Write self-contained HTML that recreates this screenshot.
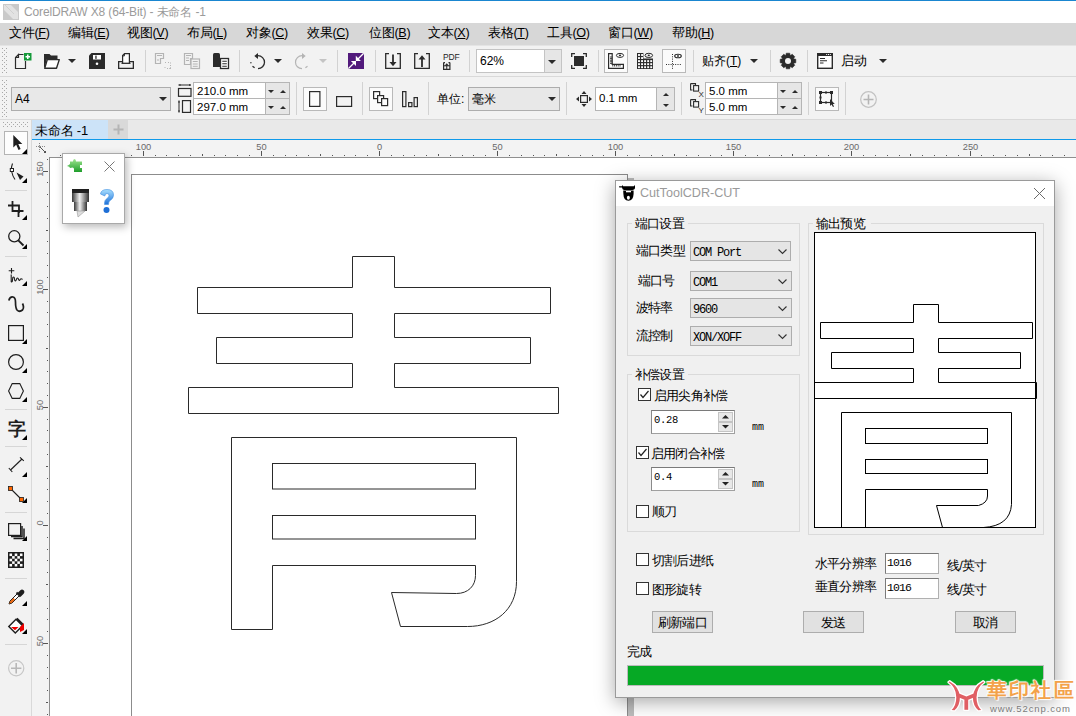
<!DOCTYPE html><html><head><meta charset="utf-8"><style>
*{box-sizing:border-box;margin:0;padding:0}
html,body{width:1076px;height:716px;overflow:hidden}
body{position:relative;background:#fff;font-family:"Liberation Sans",sans-serif;font-size:12px;color:#000}
.a{position:absolute}
.t{position:absolute;white-space:nowrap;line-height:1}
.sep{position:absolute;width:1px;background:#d4d4d4}
.hsep{position:absolute;height:1px;background:#d4d4d4}
svg{position:absolute;overflow:visible}
.mono{font-family:"Liberation Mono",monospace}
</style></head><body><div class="a" style="left:0px;top:0px;width:1076px;height:1px;background:#1a86d0"></div>
<div class="a" style="left:0px;top:1px;width:1076px;height:22px;background:#fff"></div>
<svg style="left:3px;top:4px;" width="16" height="16" viewBox="0 0 16 16"><rect x="0" y="0" width="16" height="16" fill="#c9c9c9"/><path d="M1 1 L8 1 L15 8 L15 15 L10 15 L1 6 Z" fill="#e2e2e2"/><path d="M2 1 L11 10" stroke="#d0d0d0" stroke-width="1"/></svg>
<div class="t" style="left:24px;top:6px;color:#9b9b9b;font-size:12px;letter-spacing:-0.15px">CorelDRAW X8 (64-Bit) - 未命名 -1</div>
<div class="a" style="left:0px;top:23px;width:1076px;height:22px;background:#d7d7d7"></div>
<div class="t" style="left:9px;top:26px;font-size:12.6px;letter-spacing:-0.3px;color:#000;line-height:14px">文件(<u>F</u>)</div>
<div class="t" style="left:68px;top:26px;font-size:12.6px;letter-spacing:-0.3px;color:#000;line-height:14px">编辑(<u>E</u>)</div>
<div class="t" style="left:127px;top:26px;font-size:12.6px;letter-spacing:-0.3px;color:#000;line-height:14px">视图(<u>V</u>)</div>
<div class="t" style="left:187px;top:26px;font-size:12.6px;letter-spacing:-0.3px;color:#000;line-height:14px">布局(<u>L</u>)</div>
<div class="t" style="left:246px;top:26px;font-size:12.6px;letter-spacing:-0.3px;color:#000;line-height:14px">对象(<u>C</u>)</div>
<div class="t" style="left:307px;top:26px;font-size:12.6px;letter-spacing:-0.3px;color:#000;line-height:14px">效果(<u>C</u>)</div>
<div class="t" style="left:369px;top:26px;font-size:12.6px;letter-spacing:-0.3px;color:#000;line-height:14px">位图(<u>B</u>)</div>
<div class="t" style="left:428px;top:26px;font-size:12.6px;letter-spacing:-0.3px;color:#000;line-height:14px">文本(<u>X</u>)</div>
<div class="t" style="left:488px;top:26px;font-size:12.6px;letter-spacing:-0.3px;color:#000;line-height:14px">表格(<u>T</u>)</div>
<div class="t" style="left:547px;top:26px;font-size:12.6px;letter-spacing:-0.3px;color:#000;line-height:14px">工具(<u>O</u>)</div>
<div class="t" style="left:608px;top:26px;font-size:12.6px;letter-spacing:-0.3px;color:#000;line-height:14px">窗口(<u>W</u>)</div>
<div class="t" style="left:672px;top:26px;font-size:12.6px;letter-spacing:-0.3px;color:#000;line-height:14px">帮助(<u>H</u>)</div>
<div class="a" style="left:0px;top:45px;width:1076px;height:31px;background:#f2f2f2"></div>
<div class="a" style="left:0px;top:45px;width:1076px;height:1px;background:#e4e4e4"></div>
<div class="a" style="left:0px;top:76px;width:1076px;height:1px;background:#d9d9d9"></div>
<div class="a" style="left:0px;top:77px;width:1076px;height:42px;background:#f2f2f2"></div>
<div class="a" style="left:0px;top:119px;width:1076px;height:1px;background:#d9d9d9"></div>
<svg style="left:2px;top:48px;" width="5" height="25" viewBox="0 0 5 25"><rect x="0" y="0" width="1" height="1" fill="#a8a8a8"/><rect x="4" y="0" width="1" height="1" fill="#a8a8a8"/><rect x="2" y="2" width="1" height="1" fill="#a8a8a8"/><rect x="0" y="4" width="1" height="1" fill="#a8a8a8"/><rect x="4" y="4" width="1" height="1" fill="#a8a8a8"/><rect x="2" y="6" width="1" height="1" fill="#a8a8a8"/><rect x="0" y="8" width="1" height="1" fill="#a8a8a8"/><rect x="4" y="8" width="1" height="1" fill="#a8a8a8"/><rect x="2" y="10" width="1" height="1" fill="#a8a8a8"/><rect x="0" y="12" width="1" height="1" fill="#a8a8a8"/><rect x="4" y="12" width="1" height="1" fill="#a8a8a8"/><rect x="2" y="14" width="1" height="1" fill="#a8a8a8"/><rect x="0" y="16" width="1" height="1" fill="#a8a8a8"/><rect x="4" y="16" width="1" height="1" fill="#a8a8a8"/><rect x="2" y="18" width="1" height="1" fill="#a8a8a8"/><rect x="0" y="20" width="1" height="1" fill="#a8a8a8"/><rect x="4" y="20" width="1" height="1" fill="#a8a8a8"/><rect x="2" y="22" width="1" height="1" fill="#a8a8a8"/><rect x="0" y="24" width="1" height="1" fill="#a8a8a8"/><rect x="4" y="24" width="1" height="1" fill="#a8a8a8"/></svg>
<svg style="left:2px;top:80px;" width="5" height="37" viewBox="0 0 5 37"><rect x="0" y="0" width="1" height="1" fill="#a8a8a8"/><rect x="4" y="0" width="1" height="1" fill="#a8a8a8"/><rect x="2" y="2" width="1" height="1" fill="#a8a8a8"/><rect x="0" y="4" width="1" height="1" fill="#a8a8a8"/><rect x="4" y="4" width="1" height="1" fill="#a8a8a8"/><rect x="2" y="6" width="1" height="1" fill="#a8a8a8"/><rect x="0" y="8" width="1" height="1" fill="#a8a8a8"/><rect x="4" y="8" width="1" height="1" fill="#a8a8a8"/><rect x="2" y="10" width="1" height="1" fill="#a8a8a8"/><rect x="0" y="12" width="1" height="1" fill="#a8a8a8"/><rect x="4" y="12" width="1" height="1" fill="#a8a8a8"/><rect x="2" y="14" width="1" height="1" fill="#a8a8a8"/><rect x="0" y="16" width="1" height="1" fill="#a8a8a8"/><rect x="4" y="16" width="1" height="1" fill="#a8a8a8"/><rect x="2" y="18" width="1" height="1" fill="#a8a8a8"/><rect x="0" y="20" width="1" height="1" fill="#a8a8a8"/><rect x="4" y="20" width="1" height="1" fill="#a8a8a8"/><rect x="2" y="22" width="1" height="1" fill="#a8a8a8"/><rect x="0" y="24" width="1" height="1" fill="#a8a8a8"/><rect x="4" y="24" width="1" height="1" fill="#a8a8a8"/><rect x="2" y="26" width="1" height="1" fill="#a8a8a8"/><rect x="0" y="28" width="1" height="1" fill="#a8a8a8"/><rect x="4" y="28" width="1" height="1" fill="#a8a8a8"/><rect x="2" y="30" width="1" height="1" fill="#a8a8a8"/><rect x="0" y="32" width="1" height="1" fill="#a8a8a8"/><rect x="4" y="32" width="1" height="1" fill="#a8a8a8"/><rect x="2" y="34" width="1" height="1" fill="#a8a8a8"/><rect x="0" y="36" width="1" height="1" fill="#a8a8a8"/><rect x="4" y="36" width="1" height="1" fill="#a8a8a8"/></svg>
<svg style="left:15px;top:53px;" width="17" height="16" viewBox="0 0 17 16"><path d="M3.5 1.5 H8.5 M10.5 8 V15.5 H0.5 V4.5 L3.5 1.5 V4.5 H0.5" fill="none" stroke="#2b2b2b" stroke-width="1.2"/><rect x="9" y="0" width="7.5" height="7.5" fill="#159a3a"/><path d="M12.75 1.5 V6 M10.5 3.75 H15" stroke="#fff" stroke-width="1.5"/></svg>
<svg style="left:44px;top:53px;" width="16" height="16" viewBox="0 0 16 16"><path d="M0 1 H5.5 L7 2.5 H13.5 V6 H3 L0.8 14 H0 Z" fill="#2b2b2b"/><path d="M3.3 6.6 H15.3 L12.5 15.3 H0.7 Z" fill="#fff" stroke="#2b2b2b" stroke-width="1.4" stroke-linejoin="round"/></svg>
<svg style="left:68px;top:59px;" width="8" height="4" viewBox="0 0 8 4"><path d="M0 0 H8 L4.0 4 Z" fill="#2b2b2b"/></svg>
<svg style="left:89px;top:53px;" width="16" height="16" viewBox="0 0 16 16"><path d="M2.5 0 H16 V16 H0 V2.5 Z" fill="#2b2b2b"/><rect x="4" y="2" width="8" height="4.5" fill="#fff"/><rect x="6.3" y="2.6" width="1.3" height="3.3" fill="#2b2b2b"/><circle cx="8" cy="10.8" r="1.3" fill="#fff"/></svg>
<svg style="left:118px;top:53px;" width="16" height="16" viewBox="0 0 16 16"><path d="M4.6 10.3 V2.6 L6.6 0.6 H11.4 V10.3" fill="#fff" stroke="#2b2b2b" stroke-width="1.2"/><path d="M4.6 2.9 H6.4 V0.8" fill="none" stroke="#2b2b2b" stroke-width="1"/><path d="M3.5 10.3 H12.5" stroke="#2b2b2b" stroke-width="1.3"/><path d="M4 8.6 H0.65 V15.35 H15.35 V8.6 H12" fill="none" stroke="#2b2b2b" stroke-width="1.3"/></svg>
<div class="a" style="left:145px;top:50px;width:1px;height:22px;background:#d2d2d2"></div>
<svg style="left:155px;top:53px;" width="16" height="16" viewBox="0 0 16 16"><path d="M0.5 0.5 H8.5 V5.5 H5.5 V10.5 H0.5 Z" fill="none" stroke="#b4b4b4" stroke-width="1.2"/><path d="M2 2.5 H7 M2 7 H4" stroke="#b4b4b4" stroke-width="1"/><path d="M10 9.5 h1 M13 9.5 h1 M15.5 9.5 v1 M15.5 12 v1 M15.5 14.5 v1 h-1 M12 15.5 h1 M10 14 v1" stroke="#b4b4b4" stroke-width="1"/></svg>
<svg style="left:184px;top:53px;" width="16" height="16" viewBox="0 0 16 16"><path d="M0.5 0.5 H8.5 V5.5 H6.5 V11.5 H0.5 Z" fill="none" stroke="#b4b4b4" stroke-width="1.2"/><path d="M2 2.5 H7 M2 5 H5 M2 7.5 H5" stroke="#b4b4b4" stroke-width="1"/><rect x="7" y="6" width="8.5" height="9.5" fill="none" stroke="#b4b4b4" stroke-width="1.2"/><path d="M8.8 8.5 H13.7 M8.8 11 H13.7 M8.8 13.3 H13.7" stroke="#b4b4b4" stroke-width="1"/></svg>
<svg style="left:213px;top:53px;" width="16" height="16" viewBox="0 0 16 16"><path d="M0 1.5 Q0 0 1.5 0 H5.5 Q7 0 7 1.5 V14 H0 Z" fill="#2b2b2b"/><rect x="7.5" y="5.5" width="8" height="10" fill="#fff" stroke="#2b2b2b" stroke-width="1.3"/><path d="M9.3 8.3 H13.8 M9.3 10.8 H13.8 M9.3 13.2 H13.8" stroke="#2b2b2b" stroke-width="1.1"/></svg>
<div class="a" style="left:239px;top:50px;width:1px;height:22px;background:#d2d2d2"></div>
<svg style="left:249px;top:53px;" width="16" height="16" viewBox="0 0 16 16"><path d="M9 2.7 A6.5 6.5 0 0 1 9 15.7" fill="none" stroke="#2b2b2b" stroke-width="1.3"/><path d="M5.6 14.8 L3.5 13.2" stroke="#2b2b2b" stroke-width="1.3"/><circle cx="1.9" cy="9.8" r="0.7" fill="#2b2b2b"/><path d="M5.3 2.9 L9 0 V5.9 Z" fill="#2b2b2b"/></svg>
<svg style="left:274px;top:59px;" width="8" height="4" viewBox="0 0 8 4"><path d="M0 0 H8 L4.0 4 Z" fill="#2b2b2b"/></svg>
<svg style="left:295px;top:53px;" width="16" height="16" viewBox="0 0 16 16"><g transform="translate(16 0) scale(-1 1)"><path d="M9 2.7 A6.5 6.5 0 0 1 9 15.7" fill="none" stroke="#b4b4b4" stroke-width="1.2"/><path d="M5.6 14.8 L3.5 13.2" stroke="#b4b4b4" stroke-width="1.2"/><path d="M5.3 2.9 L9 0 V5.9 Z" fill="#b4b4b4"/></g></svg>
<svg style="left:319px;top:59px;" width="8" height="4" viewBox="0 0 8 4"><path d="M0 0 H8 L4.0 4 Z" fill="#c4c4c4"/></svg>
<div class="a" style="left:337px;top:50px;width:1px;height:22px;background:#d2d2d2"></div>
<svg style="left:348px;top:53px;" width="16" height="16" viewBox="0 0 16 16"><path d="M0 0 H16 V16 H1.5 Q0 16 0 14.5 Z" fill="#521a7c"/><path d="M0.5 15.5 L6 10 M10 6 L15.7 0.3" stroke="#fff" stroke-width="1.3"/><path d="M7.8 2.8 V7.9 H12.9 Z M2.9 8 H8 V13 Z" fill="#fff"/></svg>
<div class="a" style="left:375px;top:50px;width:1px;height:22px;background:#d2d2d2"></div>
<svg style="left:385px;top:53px;" width="16" height="16" viewBox="0 0 16 16"><path d="M4 0.7 H0.7 V15.3 H15.3 V0.7 H12" fill="none" stroke="#2b2b2b" stroke-width="1.3"/><path d="M8 1.5 V11" stroke="#2b2b2b" stroke-width="1.8"/><path d="M4.5 9 H11.5 L8 13.3 Z" fill="#2b2b2b"/></svg>
<svg style="left:414px;top:53px;" width="16" height="16" viewBox="0 0 16 16"><path d="M4 0.7 H0.7 V15.3 H15.3 V0.7 H12" fill="none" stroke="#2b2b2b" stroke-width="1.3"/><path d="M8 5 V14" stroke="#2b2b2b" stroke-width="1.8"/><path d="M4.5 6.5 H11.5 L8 2.3 Z" fill="#2b2b2b"/></svg>
<div class="t" style="left:443px;top:53px;font-size:8.5px;color:#1e1e1e;letter-spacing:-0.2px;line-height:8px">PDF</div>
<svg style="left:443px;top:62px;" width="8" height="8" viewBox="0 0 8 8"><path d="M0.6 1.8 V7.4 H6.9 V1.8 M0.6 0.6 H2 M5.5 0.6 H6.9 M0.6 0.6 V2 M6.9 0.6 V2" fill="none" stroke="#2b2b2b" stroke-width="1.2"/><path d="M3.75 3.5 V7.4 M0.6 3.8 H6.9" stroke="#2b2b2b" stroke-width="1"/><path d="M1.5 3.8 L3.75 1.2 L6 3.8 Z" fill="#2b2b2b"/></svg>
<div class="a" style="left:469px;top:50px;width:1px;height:22px;background:#d2d2d2"></div>
<div class="a" style="left:476px;top:49px;width:86px;height:24px;background:#fff;border:1px solid #c4c4c4"></div>
<div class="a" style="left:544px;top:50px;width:17px;height:22px;background:#e6e6e6;border-left:1px solid #c4c4c4"></div>
<svg style="left:548px;top:60px;" width="8" height="4" viewBox="0 0 8 4"><path d="M0 0 H8 L4.0 4 Z" fill="#2b2b2b"/></svg>
<div class="t" style="left:480px;top:55px;font-size:12px;color:#000">62%</div>
<svg style="left:571px;top:53px;" width="16" height="16" viewBox="0 0 16 16"><path d="M0.7 4 V0.7 H4 M12 0.7 H15.3 V4 M15.3 12 V15.3 H12 M4 15.3 H0.7 V12" fill="none" stroke="#2b2b2b" stroke-width="1.3"/><rect x="3" y="3" width="10" height="10" fill="#2b2b2b"/></svg>
<div class="a" style="left:598px;top:50px;width:1px;height:22px;background:#d2d2d2"></div>
<div class="a" style="left:604px;top:49px;width:24px;height:24px;border:1px solid #b9b9b9;background:#fbfbfb"></div>
<svg style="left:608px;top:53px;" width="16" height="16" viewBox="0 0 16 16"><path d="M0.6 0.6 H4.2 V11.3 H15.4 V15.4 H0.6 Z" fill="#fff" stroke="#2b2b2b" stroke-width="1.2"/><path d="M2 4 H4.2 M2 5.6 H4.2 M2 7.2 H4.2 M2 8.8 H4.2 M2 10.4 H4.2 M4.8 11.3 V13.5 M6.6 11.3 V13.5 M8.4 11.3 V13.5 M10.2 11.3 V13.5 M12 11.3 V13.5" stroke="#2b2b2b" stroke-width="0.9"/><ellipse cx="12" cy="2.4" rx="3.6" ry="2" fill="none" stroke="#2b2b2b" stroke-width="1"/><ellipse cx="12" cy="2.4" rx="1.1" ry="0.8" fill="#2b2b2b"/></svg>
<svg style="left:637px;top:53px;" width="16" height="16" viewBox="0 0 16 16"><path d="M0 0 H6.4 V5.4 H16 V16 H0 Z" fill="#2b2b2b"/><g fill="#fff"><rect x="1.05" y="1.05" width="1.9" height="1.9"/><rect x="4.10" y="1.05" width="1.9" height="1.9"/><rect x="1.05" y="4.10" width="1.9" height="1.9"/><rect x="4.10" y="4.10" width="1.9" height="1.9"/><rect x="1.05" y="7.15" width="1.9" height="1.9"/><rect x="4.10" y="7.15" width="1.9" height="1.9"/><rect x="7.15" y="7.15" width="1.9" height="1.9"/><rect x="10.20" y="7.15" width="1.9" height="1.9"/><rect x="13.25" y="7.15" width="1.9" height="1.9"/><rect x="1.05" y="10.20" width="1.9" height="1.9"/><rect x="4.10" y="10.20" width="1.9" height="1.9"/><rect x="7.15" y="10.20" width="1.9" height="1.9"/><rect x="10.20" y="10.20" width="1.9" height="1.9"/><rect x="13.25" y="10.20" width="1.9" height="1.9"/><rect x="1.05" y="13.25" width="1.9" height="1.9"/><rect x="4.10" y="13.25" width="1.9" height="1.9"/><rect x="7.15" y="13.25" width="1.9" height="1.9"/><rect x="10.20" y="13.25" width="1.9" height="1.9"/><rect x="13.25" y="13.25" width="1.9" height="1.9"/></g><ellipse cx="11.8" cy="2.4" rx="3.8" ry="2.1" fill="#f2f2f2" stroke="#2b2b2b" stroke-width="1"/><ellipse cx="11.8" cy="2.4" rx="1.1" ry="0.8" fill="#2b2b2b"/></svg>
<div class="a" style="left:662px;top:49px;width:24px;height:24px;border:1px solid #b9b9b9;background:#fbfbfb"></div>
<svg style="left:666px;top:53px;" width="16" height="16" viewBox="0 0 16 16"><path d="M6.5 1 V16 M0 11.5 H16" fill="none" stroke="#2b2b2b" stroke-width="1" stroke-dasharray="1 1.3"/><ellipse cx="12" cy="3" rx="3.3" ry="1.8" fill="#fbfbfb" stroke="#2b2b2b" stroke-width="1.1"/><circle cx="12" cy="3" r="0.9" fill="#2b2b2b"/></svg>
<div class="a" style="left:693px;top:50px;width:1px;height:22px;background:#d2d2d2"></div>
<div class="t" style="left:702px;top:55px;font-size:12px">贴齐(<u>T</u>)</div>
<svg style="left:750px;top:59px;" width="8" height="4" viewBox="0 0 8 4"><path d="M0 0 H8 L4.0 4 Z" fill="#2b2b2b"/></svg>
<div class="a" style="left:770px;top:50px;width:1px;height:22px;background:#d2d2d2"></div>
<svg style="left:780px;top:53px;" width="16" height="16" viewBox="0 0 16 16"><path d="M15.81 6.25 L15.81 9.75 L13.11 10.28 L13.23 10.00 L14.76 12.29 L12.29 14.76 L10.00 13.23 L10.28 13.11 L9.75 15.81 L6.25 15.81 L5.72 13.11 L6.00 13.23 L3.71 14.76 L1.24 12.29 L2.77 10.00 L2.89 10.28 L0.19 9.75 L0.19 6.25 L2.89 5.72 L2.77 6.00 L1.24 3.71 L3.71 1.24 L6.00 2.77 L5.72 2.89 L6.25 0.19 L9.75 0.19 L10.28 2.89 L10.00 2.77 L12.29 1.24 L14.76 3.71 L13.23 6.00 L13.11 5.72 Z" fill="#2b2b2b" stroke="#2b2b2b" stroke-width="0.6" stroke-linejoin="round"/><circle cx="8" cy="8" r="3" fill="#f2f2f2"/></svg>
<div class="a" style="left:807px;top:50px;width:1px;height:22px;background:#d2d2d2"></div>
<svg style="left:817px;top:53px;" width="16" height="16" viewBox="0 0 16 16"><rect x="0.7" y="0.7" width="14.6" height="14.6" fill="#fff" stroke="#2b2b2b" stroke-width="1.4"/><rect x="0" y="0" width="16" height="3" fill="#2b2b2b"/><path d="M11 1.5 h1 M12.8 1.5 h1 M9.2 1.5 h1" stroke="#fff" stroke-width="1"/><path d="M3 5.5 H8 M3 7.8 H10 M3 10 H6.5" stroke="#2b2b2b" stroke-width="1.1"/></svg>
<div class="t" style="left:841px;top:55px;font-size:12.5px">启动</div>
<svg style="left:879px;top:59px;" width="8" height="4" viewBox="0 0 8 4"><path d="M0 0 H8 L4.0 4 Z" fill="#2b2b2b"/></svg>
<div class="a" style="left:11px;top:87px;width:160px;height:24px;background:#e8e8e8;border:1px solid #adadad"></div>
<div class="t" style="left:15px;top:93px;font-size:12px">A4</div>
<svg style="left:159px;top:97px;" width="8" height="4" viewBox="0 0 8 4"><path d="M0 0 H8 L4.0 4 Z" fill="#2b2b2b"/></svg>
<svg style="left:178px;top:84px;" width="14" height="13" viewBox="0 0 14 13"><path d="M0.5 1 H13" stroke="#2b2b2b" stroke-width="1"/><path d="M0.5 1 L2.5 0 V2 Z M13 1 L11 0 V2 Z" fill="#2b2b2b"/><rect x="0.5" y="4.5" width="12.5" height="7.8" fill="none" stroke="#2b2b2b" stroke-width="1.2"/></svg>
<svg style="left:178px;top:100px;" width="14" height="13" viewBox="0 0 14 13"><path d="M1 0.5 V12.5" stroke="#2b2b2b" stroke-width="1"/><path d="M1 0.5 L0 2.5 H2 Z M1 12.5 L0 10.5 H2 Z" fill="#2b2b2b"/><rect x="4.5" y="0.6" width="8" height="11.8" fill="none" stroke="#2b2b2b" stroke-width="1.2"/></svg>
<div class="a" style="left:193px;top:82px;width:97px;height:33px;background:#fff;border:1px solid #b5b5b5"></div>
<div class="a" style="left:193px;top:98px;width:97px;height:1px;background:#b5b5b5"></div>
<div class="a" style="left:265px;top:82px;width:25px;height:33px;background:#e6e6e6;border:1px solid #b5b5b5"></div>
<div class="a" style="left:265px;top:98px;width:25px;height:1px;background:#b5b5b5"></div>
<div class="t" style="left:197px;top:86px;font-size:11.5px">210.0 mm</div>
<div class="t" style="left:197px;top:102px;font-size:11.5px">297.0 mm</div>
<svg style="left:268px;top:90px;" width="6" height="3" viewBox="0 0 6 3"><path d="M0 0 H6 L3.0 3 Z" fill="#2b2b2b"/></svg>
<svg style="left:280px;top:90px;" width="6" height="3" viewBox="0 0 6 3"><path d="M0 3 H6 L3.0 0 Z" fill="#2b2b2b"/></svg>
<svg style="left:268px;top:106px;" width="6" height="3" viewBox="0 0 6 3"><path d="M0 0 H6 L3.0 3 Z" fill="#2b2b2b"/></svg>
<svg style="left:280px;top:106px;" width="6" height="3" viewBox="0 0 6 3"><path d="M0 3 H6 L3.0 0 Z" fill="#2b2b2b"/></svg>
<div class="a" style="left:296px;top:82px;width:1px;height:33px;background:#d2d2d2"></div>
<div class="a" style="left:303px;top:87px;width:24px;height:24px;border:1px solid #b9b9b9;background:#fbfbfb"></div>
<svg style="left:309px;top:91px;" width="12" height="16" viewBox="0 0 12 16"><rect x="0.6" y="0.6" width="10.3" height="14.8" fill="none" stroke="#2b2b2b" stroke-width="1.2"/></svg>
<svg style="left:336px;top:96px;" width="16" height="11" viewBox="0 0 16 11"><rect x="0.6" y="0.6" width="15" height="9.8" fill="none" stroke="#2b2b2b" stroke-width="1.2"/></svg>
<div class="a" style="left:362px;top:82px;width:1px;height:33px;background:#d2d2d2"></div>
<div class="a" style="left:369px;top:87px;width:24px;height:24px;border:1px solid #b9b9b9;background:#fbfbfb"></div>
<svg style="left:373px;top:91px;" width="16" height="16" viewBox="0 0 16 16"><rect x="0.6" y="0.6" width="6" height="7" fill="#fbfbfb" stroke="#2b2b2b" stroke-width="1.2"/><rect x="4.6" y="4.6" width="6" height="7" fill="#fbfbfb" stroke="#2b2b2b" stroke-width="1.2"/><rect x="8.6" y="7.6" width="6" height="7" fill="#fbfbfb" stroke="#2b2b2b" stroke-width="1.2"/></svg>
<svg style="left:402px;top:91px;" width="16" height="16" viewBox="0 0 16 16"><rect x="0.6" y="0.6" width="3.3" height="15" fill="none" stroke="#2b2b2b" stroke-width="1.2"/><rect x="6.6" y="11.6" width="3.3" height="4" fill="none" stroke="#2b2b2b" stroke-width="1.2"/><rect x="12.1" y="6.6" width="3.3" height="9" fill="none" stroke="#2b2b2b" stroke-width="1.2"/></svg>
<div class="a" style="left:428px;top:82px;width:1px;height:33px;background:#d2d2d2"></div>
<div class="t" style="left:437px;top:93px;font-size:12px">单位:</div>
<div class="a" style="left:468px;top:87px;width:92px;height:24px;background:#e8e8e8;border:1px solid #adadad"></div>
<div class="t" style="left:472px;top:93px;font-size:12px">毫米</div>
<svg style="left:548px;top:97px;" width="8" height="4" viewBox="0 0 8 4"><path d="M0 0 H8 L4.0 4 Z" fill="#2b2b2b"/></svg>
<div class="a" style="left:566px;top:82px;width:1px;height:33px;background:#d2d2d2"></div>
<svg style="left:576px;top:91px;" width="16" height="16" viewBox="0 0 16 16"><rect x="4.6" y="4.6" width="6.8" height="6.8" fill="none" stroke="#2b2b2b" stroke-width="1.2"/><path d="M8 0 L5.5 3 H10.5 Z M8 16 L5.5 13 H10.5 Z M0 8 L3 5.5 V10.5 Z M16 8 L13 5.5 V10.5 Z" fill="#2b2b2b"/></svg>
<div class="a" style="left:595px;top:87px;width:80px;height:24px;background:#fff;border:1px solid #b5b5b5"></div>
<div class="a" style="left:656px;top:87px;width:19px;height:24px;background:#e6e6e6;border:1px solid #b5b5b5"></div>
<svg style="left:663px;top:93px;" width="6" height="3" viewBox="0 0 6 3"><path d="M0 3 H6 L3.0 0 Z" fill="#2b2b2b"/></svg>
<svg style="left:663px;top:104px;" width="6" height="3" viewBox="0 0 6 3"><path d="M0 0 H6 L3.0 3 Z" fill="#2b2b2b"/></svg>
<div class="t" style="left:599px;top:93px;font-size:11.5px">0.1 mm</div>
<div class="a" style="left:681px;top:82px;width:1px;height:33px;background:#d2d2d2"></div>
<svg style="left:690px;top:83px;" width="15" height="15" viewBox="0 0 15 15"><path d="M0.6 0.6 H5.5 V2.5 M0.6 0.6 V7 H2.5" fill="none" stroke="#2b2b2b" stroke-width="1.1"/><rect x="3.6" y="2.6" width="5" height="5.5" fill="none" stroke="#2b2b2b" stroke-width="1.1"/><text x="8.5" y="14" font-size="8" font-family="Liberation Sans" fill="#2b2b2b">X</text></svg>
<svg style="left:690px;top:99px;" width="15" height="15" viewBox="0 0 15 15"><path d="M0.6 0.6 H5.5 V2.5 M0.6 0.6 V7 H2.5" fill="none" stroke="#2b2b2b" stroke-width="1.1"/><rect x="3.6" y="2.6" width="5" height="5.5" fill="none" stroke="#2b2b2b" stroke-width="1.1"/><text x="8.5" y="14" font-size="8" font-family="Liberation Sans" fill="#2b2b2b">Y</text></svg>
<div class="a" style="left:705px;top:82px;width:97px;height:33px;background:#fff;border:1px solid #b5b5b5"></div>
<div class="a" style="left:705px;top:98px;width:97px;height:1px;background:#b5b5b5"></div>
<div class="a" style="left:777px;top:82px;width:25px;height:33px;background:#e6e6e6;border:1px solid #b5b5b5"></div>
<div class="a" style="left:777px;top:98px;width:25px;height:1px;background:#b5b5b5"></div>
<div class="t" style="left:709px;top:86px;font-size:11.5px">5.0 mm</div>
<div class="t" style="left:709px;top:102px;font-size:11.5px">5.0 mm</div>
<svg style="left:780px;top:90px;" width="6" height="3" viewBox="0 0 6 3"><path d="M0 0 H6 L3.0 3 Z" fill="#2b2b2b"/></svg>
<svg style="left:792px;top:90px;" width="6" height="3" viewBox="0 0 6 3"><path d="M0 3 H6 L3.0 0 Z" fill="#2b2b2b"/></svg>
<svg style="left:780px;top:106px;" width="6" height="3" viewBox="0 0 6 3"><path d="M0 0 H6 L3.0 3 Z" fill="#2b2b2b"/></svg>
<svg style="left:792px;top:106px;" width="6" height="3" viewBox="0 0 6 3"><path d="M0 3 H6 L3.0 0 Z" fill="#2b2b2b"/></svg>
<div class="a" style="left:808px;top:82px;width:1px;height:33px;background:#d2d2d2"></div>
<div class="a" style="left:815px;top:87px;width:24px;height:24px;border:1px solid #b9b9b9;background:#fbfbfb"></div>
<svg style="left:819px;top:91px;" width="16" height="16" viewBox="0 0 16 16"><rect x="1.5" y="1.5" width="11" height="10" fill="none" stroke="#2b2b2b" stroke-width="1.2"/><g fill="#2b2b2b"><rect x="0" y="0" width="3" height="3"/><rect x="11" y="0" width="3" height="3"/><rect x="0" y="10" width="3" height="3"/><rect x="11" y="10" width="2" height="3"/><rect x="6" y="0.5" width="2" height="2"/><rect x="6" y="10.5" width="2" height="2"/><rect x="0.5" y="5.5" width="2" height="2"/></g><path d="M11 8 L11 15 L12.5 13.5 L14 16 L15 15.5 L13.8 13 L15.8 13 Z" fill="#2b2b2b"/></svg>
<div class="a" style="left:845px;top:82px;width:1px;height:33px;background:#d2d2d2"></div>
<svg style="left:860px;top:91px;" width="17" height="17" viewBox="0 0 17 17"><circle cx="8.5" cy="8.5" r="7.8" fill="none" stroke="#c2c2c2" stroke-width="1.2"/><path d="M8.5 3.5 V13.5 M3.5 8.5 H13.5" stroke="#b5b5b5" stroke-width="1.6"/></svg>
<div class="a" style="left:32px;top:120px;width:1044px;height:19px;background:#e9e9e9"></div>
<div class="a" style="left:32px;top:120px;width:76px;height:19px;background:#cce3f8"></div>
<div class="t" style="left:35px;top:124px;font-size:13px;letter-spacing:-0.2px;color:#000">未命名 -1</div>
<div class="a" style="left:108px;top:120px;width:20px;height:19px;background:#d9d9d9"></div>
<svg style="left:113px;top:124px;" width="11" height="11" viewBox="0 0 11 11"><path d="M5.5 0.5 V10.5 M0.5 5.5 H10.5" stroke="#b5b5b5" stroke-width="2"/></svg>
<div class="a" style="left:32px;top:139px;width:1044px;height:1px;background:#0f9aea"></div>
<div class="a" style="left:0px;top:120px;width:31px;height:596px;background:#f2f2f2"></div>
<div class="a" style="left:31px;top:120px;width:1px;height:596px;background:#d9d9d9"></div>
<svg style="left:3px;top:122px;" width="26" height="5" viewBox="0 0 26 5"><rect x="0" y="0" width="1" height="1" fill="#a8a8a8"/><rect x="0" y="4" width="1" height="1" fill="#a8a8a8"/><rect x="2" y="2" width="1" height="1" fill="#a8a8a8"/><rect x="4" y="0" width="1" height="1" fill="#a8a8a8"/><rect x="4" y="4" width="1" height="1" fill="#a8a8a8"/><rect x="6" y="2" width="1" height="1" fill="#a8a8a8"/><rect x="8" y="0" width="1" height="1" fill="#a8a8a8"/><rect x="8" y="4" width="1" height="1" fill="#a8a8a8"/><rect x="10" y="2" width="1" height="1" fill="#a8a8a8"/><rect x="12" y="0" width="1" height="1" fill="#a8a8a8"/><rect x="12" y="4" width="1" height="1" fill="#a8a8a8"/><rect x="14" y="2" width="1" height="1" fill="#a8a8a8"/><rect x="16" y="0" width="1" height="1" fill="#a8a8a8"/><rect x="16" y="4" width="1" height="1" fill="#a8a8a8"/><rect x="18" y="2" width="1" height="1" fill="#a8a8a8"/><rect x="20" y="0" width="1" height="1" fill="#a8a8a8"/><rect x="20" y="4" width="1" height="1" fill="#a8a8a8"/><rect x="22" y="2" width="1" height="1" fill="#a8a8a8"/><rect x="24" y="0" width="1" height="1" fill="#a8a8a8"/><rect x="24" y="4" width="1" height="1" fill="#a8a8a8"/></svg>
<div class="a" style="left:32px;top:140px;width:1044px;height:17px;background:#f3f3f3"></div>
<div class="a" style="left:32px;top:157px;width:17px;height:559px;background:#f3f3f3"></div>
<div class="a" style="left:49px;top:157px;width:1027px;height:1px;background:#8f8f8f"></div>
<div class="a" style="left:49px;top:157px;width:1px;height:559px;background:#8f8f8f"></div>
<div class="a" style="left:50px;top:158px;width:1026px;height:558px;background:#fff"></div>
<svg style="left:0;top:0" width="1076" height="716" viewBox="0 0 1076 716"><rect x="60" y="155" width="1" height="1" fill="#555"/><rect x="72" y="155" width="1" height="1" fill="#555"/><rect x="84" y="154" width="1" height="2" fill="#555"/><rect x="96" y="155" width="1" height="1" fill="#555"/><rect x="107" y="155" width="1" height="1" fill="#555"/><rect x="119" y="155" width="1" height="1" fill="#555"/><rect x="131" y="155" width="1" height="1" fill="#555"/><rect x="143" y="151" width="1" height="5" fill="#555"/><text x="143.5" y="150" font-size="9.3" font-family="Liberation Sans" fill="#6a6a6a" text-anchor="middle">100</text><rect x="155" y="155" width="1" height="1" fill="#555"/><rect x="166" y="155" width="1" height="1" fill="#555"/><rect x="178" y="155" width="1" height="1" fill="#555"/><rect x="190" y="155" width="1" height="1" fill="#555"/><rect x="202" y="154" width="1" height="2" fill="#555"/><rect x="214" y="155" width="1" height="1" fill="#555"/><rect x="225" y="155" width="1" height="1" fill="#555"/><rect x="237" y="155" width="1" height="1" fill="#555"/><rect x="249" y="155" width="1" height="1" fill="#555"/><rect x="261" y="151" width="1" height="5" fill="#555"/><text x="261.5" y="150" font-size="9.3" font-family="Liberation Sans" fill="#6a6a6a" text-anchor="middle">50</text><rect x="273" y="155" width="1" height="1" fill="#555"/><rect x="285" y="155" width="1" height="1" fill="#555"/><rect x="296" y="155" width="1" height="1" fill="#555"/><rect x="308" y="155" width="1" height="1" fill="#555"/><rect x="320" y="154" width="1" height="2" fill="#555"/><rect x="332" y="155" width="1" height="1" fill="#555"/><rect x="344" y="155" width="1" height="1" fill="#555"/><rect x="355" y="155" width="1" height="1" fill="#555"/><rect x="367" y="155" width="1" height="1" fill="#555"/><rect x="379" y="151" width="1" height="5" fill="#555"/><text x="379.5" y="150" font-size="9.3" font-family="Liberation Sans" fill="#6a6a6a" text-anchor="middle">0</text><rect x="391" y="155" width="1" height="1" fill="#555"/><rect x="403" y="155" width="1" height="1" fill="#555"/><rect x="414" y="155" width="1" height="1" fill="#555"/><rect x="426" y="155" width="1" height="1" fill="#555"/><rect x="438" y="154" width="1" height="2" fill="#555"/><rect x="450" y="155" width="1" height="1" fill="#555"/><rect x="462" y="155" width="1" height="1" fill="#555"/><rect x="473" y="155" width="1" height="1" fill="#555"/><rect x="485" y="155" width="1" height="1" fill="#555"/><rect x="497" y="151" width="1" height="5" fill="#555"/><text x="497.5" y="150" font-size="9.3" font-family="Liberation Sans" fill="#6a6a6a" text-anchor="middle">50</text><rect x="509" y="155" width="1" height="1" fill="#555"/><rect x="521" y="155" width="1" height="1" fill="#555"/><rect x="533" y="155" width="1" height="1" fill="#555"/><rect x="544" y="155" width="1" height="1" fill="#555"/><rect x="556" y="154" width="1" height="2" fill="#555"/><rect x="568" y="155" width="1" height="1" fill="#555"/><rect x="580" y="155" width="1" height="1" fill="#555"/><rect x="592" y="155" width="1" height="1" fill="#555"/><rect x="603" y="155" width="1" height="1" fill="#555"/><rect x="615" y="151" width="1" height="5" fill="#555"/><text x="615.5" y="150" font-size="9.3" font-family="Liberation Sans" fill="#6a6a6a" text-anchor="middle">100</text><rect x="627" y="155" width="1" height="1" fill="#555"/><rect x="639" y="155" width="1" height="1" fill="#555"/><rect x="651" y="155" width="1" height="1" fill="#555"/><rect x="662" y="155" width="1" height="1" fill="#555"/><rect x="674" y="154" width="1" height="2" fill="#555"/><rect x="686" y="155" width="1" height="1" fill="#555"/><rect x="698" y="155" width="1" height="1" fill="#555"/><rect x="710" y="155" width="1" height="1" fill="#555"/><rect x="721" y="155" width="1" height="1" fill="#555"/><rect x="733" y="151" width="1" height="5" fill="#555"/><text x="733.5" y="150" font-size="9.3" font-family="Liberation Sans" fill="#6a6a6a" text-anchor="middle">150</text><rect x="745" y="155" width="1" height="1" fill="#555"/><rect x="757" y="155" width="1" height="1" fill="#555"/><rect x="769" y="155" width="1" height="1" fill="#555"/><rect x="781" y="155" width="1" height="1" fill="#555"/><rect x="792" y="154" width="1" height="2" fill="#555"/><rect x="804" y="155" width="1" height="1" fill="#555"/><rect x="816" y="155" width="1" height="1" fill="#555"/><rect x="828" y="155" width="1" height="1" fill="#555"/><rect x="840" y="155" width="1" height="1" fill="#555"/><rect x="851" y="151" width="1" height="5" fill="#555"/><text x="851.5" y="150" font-size="9.3" font-family="Liberation Sans" fill="#6a6a6a" text-anchor="middle">200</text><rect x="863" y="155" width="1" height="1" fill="#555"/><rect x="875" y="155" width="1" height="1" fill="#555"/><rect x="887" y="155" width="1" height="1" fill="#555"/><rect x="899" y="155" width="1" height="1" fill="#555"/><rect x="910" y="154" width="1" height="2" fill="#555"/><rect x="922" y="155" width="1" height="1" fill="#555"/><rect x="934" y="155" width="1" height="1" fill="#555"/><rect x="946" y="155" width="1" height="1" fill="#555"/><rect x="958" y="155" width="1" height="1" fill="#555"/><rect x="970" y="151" width="1" height="5" fill="#555"/><text x="970.5" y="150" font-size="9.3" font-family="Liberation Sans" fill="#6a6a6a" text-anchor="middle">250</text><rect x="981" y="155" width="1" height="1" fill="#555"/><rect x="993" y="155" width="1" height="1" fill="#555"/><rect x="1005" y="155" width="1" height="1" fill="#555"/><rect x="1017" y="155" width="1" height="1" fill="#555"/><rect x="1029" y="154" width="1" height="2" fill="#555"/><rect x="1040" y="155" width="1" height="1" fill="#555"/><rect x="1052" y="155" width="1" height="1" fill="#555"/><rect x="1064" y="155" width="1" height="1" fill="#555"/><rect x="47" y="714" width="1" height="1" fill="#555"/><rect x="46" y="702" width="2" height="1" fill="#555"/><rect x="47" y="690" width="1" height="1" fill="#555"/><rect x="47" y="678" width="1" height="1" fill="#555"/><rect x="47" y="667" width="1" height="1" fill="#555"/><rect x="47" y="655" width="1" height="1" fill="#555"/><rect x="43" y="643" width="5" height="1" fill="#555"/><text x="0" y="0" transform="translate(42.6 641) rotate(-90)" font-size="9.3" font-family="Liberation Sans" fill="#6a6a6a" text-anchor="middle">50</text><rect x="47" y="631" width="1" height="1" fill="#555"/><rect x="47" y="619" width="1" height="1" fill="#555"/><rect x="47" y="608" width="1" height="1" fill="#555"/><rect x="47" y="596" width="1" height="1" fill="#555"/><rect x="46" y="584" width="2" height="1" fill="#555"/><rect x="47" y="572" width="1" height="1" fill="#555"/><rect x="47" y="560" width="1" height="1" fill="#555"/><rect x="47" y="549" width="1" height="1" fill="#555"/><rect x="47" y="537" width="1" height="1" fill="#555"/><rect x="43" y="525" width="5" height="1" fill="#555"/><text x="0" y="0" transform="translate(42.6 523) rotate(-90)" font-size="9.3" font-family="Liberation Sans" fill="#6a6a6a" text-anchor="middle">0</text><rect x="47" y="513" width="1" height="1" fill="#555"/><rect x="47" y="501" width="1" height="1" fill="#555"/><rect x="47" y="489" width="1" height="1" fill="#555"/><rect x="47" y="478" width="1" height="1" fill="#555"/><rect x="46" y="466" width="2" height="1" fill="#555"/><rect x="47" y="454" width="1" height="1" fill="#555"/><rect x="47" y="442" width="1" height="1" fill="#555"/><rect x="47" y="430" width="1" height="1" fill="#555"/><rect x="47" y="419" width="1" height="1" fill="#555"/><rect x="43" y="407" width="5" height="1" fill="#555"/><text x="0" y="0" transform="translate(42.6 405) rotate(-90)" font-size="9.3" font-family="Liberation Sans" fill="#6a6a6a" text-anchor="middle">50</text><rect x="47" y="395" width="1" height="1" fill="#555"/><rect x="47" y="383" width="1" height="1" fill="#555"/><rect x="47" y="371" width="1" height="1" fill="#555"/><rect x="47" y="360" width="1" height="1" fill="#555"/><rect x="46" y="348" width="2" height="1" fill="#555"/><rect x="47" y="336" width="1" height="1" fill="#555"/><rect x="47" y="324" width="1" height="1" fill="#555"/><rect x="47" y="312" width="1" height="1" fill="#555"/><rect x="47" y="301" width="1" height="1" fill="#555"/><rect x="43" y="289" width="5" height="1" fill="#555"/><text x="0" y="0" transform="translate(42.6 287) rotate(-90)" font-size="9.3" font-family="Liberation Sans" fill="#6a6a6a" text-anchor="middle">100</text><rect x="47" y="277" width="1" height="1" fill="#555"/><rect x="47" y="265" width="1" height="1" fill="#555"/><rect x="47" y="253" width="1" height="1" fill="#555"/><rect x="47" y="241" width="1" height="1" fill="#555"/><rect x="46" y="230" width="2" height="1" fill="#555"/><rect x="47" y="218" width="1" height="1" fill="#555"/><rect x="47" y="206" width="1" height="1" fill="#555"/><rect x="47" y="194" width="1" height="1" fill="#555"/><rect x="47" y="182" width="1" height="1" fill="#555"/><rect x="43" y="171" width="5" height="1" fill="#555"/><text x="0" y="0" transform="translate(42.6 169) rotate(-90)" font-size="9.3" font-family="Liberation Sans" fill="#6a6a6a" text-anchor="middle">150</text><rect x="47" y="159" width="1" height="1" fill="#555"/></svg>
<svg style="left:36px;top:143px;" width="11" height="11" viewBox="0 0 11 11"><path d="M3.5 0 V10 M0 3.5 H10" stroke="#8a8a8a" stroke-width="1" stroke-dasharray="1 1"/><path d="M3.5 3.5 L9.5 9.5" stroke="#555" stroke-width="1"/><rect x="8" y="8" width="2" height="2" fill="#555"/></svg>
<div class="a" style="left:131px;top:174px;width:497px;height:560px;border:1px solid #8c8c8c;background:#fff"></div>
<div class="a" style="left:628px;top:178px;width:6px;height:540px;background:#bdbdbd"></div>
<svg style="left:0;top:0" width="1076" height="716" viewBox="0 0 1076 716"><path d="M352.5 256.5 H394.5 V287.5 H550.5 V313.5 H394.5 V337.5 H530.5 V363.5 H394.5 V387.5 H558.5 V413.5 H188.5 V387.5 H352.5 V363.5 H216.5 V337.5 H352.5 V313.5 H197.5 V287.5 H352.5 Z" fill="none" stroke="#2a2a2a" stroke-width="1"/><path d="M231.5 437.5 H516.5 V581.5 C516.5 610 495 626.5 467.5 626.5 H400.5 L391.5 592.5 L456.5 593.5 C468 593.5 475.5 586 475.5 575.5 V565.5 H272.5 V629.5 H231.5 Z" fill="none" stroke="#2a2a2a" stroke-width="1"/><rect x="272.5" y="463.5" width="203" height="25.5" fill="none" stroke="#2a2a2a" stroke-width="1"/><rect x="272.5" y="515.5" width="203" height="23.5" fill="none" stroke="#2a2a2a" stroke-width="1"/></svg>
<div class="a" style="left:4px;top:131px;width:24px;height:24px;border:1px solid #b4b4b4;background:#fdfdfd"></div>
<svg style="left:12px;top:135px;" width="10" height="16" viewBox="0 0 10 16"><path d="M1.3 0 V12.5 L4.2 9.8 L6.5 15 L8.6 14 L6.3 9 H10.3 Z" fill="#1e1e1e"/></svg>
<svg style="left:22px;top:149px;" width="5" height="5" viewBox="0 0 5 5"><path d="M5 0 V5 H0 Z" fill="#000"/></svg>
<svg style="left:8px;top:163px;" width="20" height="21" viewBox="0 0 20 21"><path d="M4.5 0.5 Q3 4 3.5 8 Q4.5 13 7 16.5" fill="none" stroke="#1e1e1e" stroke-width="1.1"/><rect x="2.3" y="5.5" width="3.2" height="3" fill="#fff" stroke="#1e1e1e" stroke-width="1"/><path d="M8.5 9.5 L15.5 13.5 L12 17 Z" fill="#1e1e1e"/></svg>
<svg style="left:22px;top:178px;" width="5" height="5" viewBox="0 0 5 5"><path d="M5 0 V5 H0 Z" fill="#000"/></svg>
<div class="a" style="left:5px;top:190px;width:22px;height:1px;background:#d6d6d6"></div>
<svg style="left:8px;top:201px;" width="16" height="16" viewBox="0 0 16 16"><path d="M4.5 0 V5.5 M0 4.5 H11 V12 M4.5 4.5 V10 H15.5 M10.5 10 V16" fill="none" stroke="#1e1e1e" stroke-width="1.8"/></svg>
<svg style="left:22px;top:215px;" width="5" height="5" viewBox="0 0 5 5"><path d="M5 0 V5 H0 Z" fill="#000"/></svg>
<svg style="left:8px;top:230px;" width="17" height="17" viewBox="0 0 17 17"><circle cx="6.3" cy="6.3" r="5.6" fill="none" stroke="#1e1e1e" stroke-width="1.3"/><path d="M10.3 10.3 L15.5 15.5" stroke="#1e1e1e" stroke-width="1.9"/></svg>
<svg style="left:22px;top:244px;" width="5" height="5" viewBox="0 0 5 5"><path d="M5 0 V5 H0 Z" fill="#000"/></svg>
<div class="a" style="left:5px;top:256px;width:22px;height:1px;background:#d6d6d6"></div>
<svg style="left:8px;top:268px;" width="17" height="15" viewBox="0 0 17 15"><path d="M3.5 0 V5.5 M0.7 2.8 H6.3" stroke="#1e1e1e" stroke-width="1.1"/><path d="M3.2 6.5 V13.5 Q3.5 14.5 4.3 13.5 L4.8 9.5 Q5.5 8.5 6.2 9.5 L6.8 12.5 Q7.5 13.5 8.2 12 L8.8 10.5 Q9.5 9.5 10.2 10.5 L10.8 12 Q11.5 13 12.2 11.5 Q13 10 14.5 11.5" fill="none" stroke="#1e1e1e" stroke-width="1.1"/></svg>
<svg style="left:22px;top:281px;" width="5" height="5" viewBox="0 0 5 5"><path d="M5 0 V5 H0 Z" fill="#000"/></svg>
<svg style="left:8px;top:296px;" width="17" height="17" viewBox="0 0 17 17"><path d="M0.8 4.5 Q2 0.5 5 1 Q7.5 1.5 7.5 6 Q7.5 12 9 14 Q11.5 16.5 14.5 14 Q16.5 11.5 14.5 7.5" fill="none" stroke="#1e1e1e" stroke-width="1.7"/></svg>
<svg style="left:8px;top:325px;" width="16" height="16" viewBox="0 0 16 16"><rect x="0.6" y="0.6" width="14.8" height="14.8" fill="none" stroke="#1e1e1e" stroke-width="1.2"/></svg>
<svg style="left:22px;top:339px;" width="5" height="5" viewBox="0 0 5 5"><path d="M5 0 V5 H0 Z" fill="#000"/></svg>
<svg style="left:8px;top:354px;" width="16" height="16" viewBox="0 0 16 16"><circle cx="8" cy="8" r="7.4" fill="none" stroke="#1e1e1e" stroke-width="1.2"/></svg>
<svg style="left:22px;top:368px;" width="5" height="5" viewBox="0 0 5 5"><path d="M5 0 V5 H0 Z" fill="#000"/></svg>
<svg style="left:8px;top:383px;" width="16" height="16" viewBox="0 0 16 16"><path d="M4.2 0.6 H11.8 L15.4 8 L11.8 15.4 H4.2 L0.6 8 Z" fill="none" stroke="#1e1e1e" stroke-width="1.1"/></svg>
<svg style="left:22px;top:397px;" width="5" height="5" viewBox="0 0 5 5"><path d="M5 0 V5 H0 Z" fill="#000"/></svg>
<div class="a" style="left:5px;top:409px;width:22px;height:1px;background:#d6d6d6"></div>
<div class="t" style="left:8px;top:421px;font-size:17.5px;font-weight:bold;color:#1e1e1e;line-height:17px">字</div>
<svg style="left:22px;top:435px;" width="5" height="5" viewBox="0 0 5 5"><path d="M5 0 V5 H0 Z" fill="#000"/></svg>
<div class="a" style="left:5px;top:446px;width:22px;height:1px;background:#d6d6d6"></div>
<svg style="left:8px;top:457px;" width="17" height="16" viewBox="0 0 17 16"><path d="M2.5 13 L14 2" stroke="#1e1e1e" stroke-width="1.1"/><path d="M0.8 11 L4.3 15 M12 0.3 L15.8 3.8" stroke="#1e1e1e" stroke-width="1.1"/></svg>
<svg style="left:22px;top:472px;" width="5" height="5" viewBox="0 0 5 5"><path d="M5 0 V5 H0 Z" fill="#000"/></svg>
<svg style="left:8px;top:486px;" width="17" height="17" viewBox="0 0 17 17"><path d="M2.5 2.5 L13.5 13.5" stroke="#1e1e1e" stroke-width="1.1"/><rect x="0.5" y="0.5" width="4" height="4" fill="#f60" stroke="#1e1e1e" stroke-width="0.8"/><rect x="11.5" y="11.5" width="4" height="4" fill="#f60" stroke="#1e1e1e" stroke-width="0.8"/></svg>
<svg style="left:22px;top:498px;" width="5" height="5" viewBox="0 0 5 5"><path d="M5 0 V5 H0 Z" fill="#000"/></svg>
<div class="a" style="left:5px;top:512px;width:22px;height:1px;background:#d6d6d6"></div>
<svg style="left:8px;top:523px;" width="17" height="16" viewBox="0 0 17 16"><path d="M14 3 V13.5 H3 M16 5.5 V15.5 H5.5" fill="none" stroke="#1e1e1e" stroke-width="1.5"/><rect x="0.6" y="0.6" width="12" height="11.8" fill="none" stroke="#1e1e1e" stroke-width="1.2"/></svg>
<svg style="left:22px;top:536px;" width="5" height="5" viewBox="0 0 5 5"><path d="M5 0 V5 H0 Z" fill="#000"/></svg>
<svg style="left:8px;top:552px;" width="16" height="16" viewBox="0 0 16 16"><rect x="0" y="0" width="16" height="16" fill="#1e1e1e"/><rect x="1.5" y="1.5" width="2.6" height="2.6" fill="#fff"/><rect x="6.7" y="1.5" width="2.6" height="2.6" fill="#fff"/><rect x="11.9" y="1.5" width="2.6" height="2.6" fill="#fff"/><rect x="4.1" y="4.1" width="2.6" height="2.6" fill="#fff"/><rect x="9.3" y="4.1" width="2.6" height="2.6" fill="#fff"/><rect x="1.5" y="6.7" width="2.6" height="2.6" fill="#fff"/><rect x="6.7" y="6.7" width="2.6" height="2.6" fill="#fff"/><rect x="11.9" y="6.7" width="2.6" height="2.6" fill="#fff"/><rect x="4.1" y="9.3" width="2.6" height="2.6" fill="#fff"/><rect x="9.3" y="9.3" width="2.6" height="2.6" fill="#fff"/><rect x="1.5" y="11.9" width="2.6" height="2.6" fill="#fff"/><rect x="6.7" y="11.9" width="2.6" height="2.6" fill="#fff"/><rect x="11.9" y="11.9" width="2.6" height="2.6" fill="#fff"/></svg>
<div class="a" style="left:5px;top:578px;width:22px;height:1px;background:#d6d6d6"></div>
<svg style="left:8px;top:589px;" width="16" height="16" viewBox="0 0 16 16"><path d="M1 15 L2 12 L9.5 4.5 L11.5 6.5 L4 14 Z" fill="#fff" stroke="#1e1e1e" stroke-width="1"/><path d="M1.2 14.8 L2.3 12.2 L5.5 9 L7 10.5 L3.8 13.7 Z" fill="#e8630a"/><path d="M8.5 3.5 L12.5 7.5 M10 5 L13 2 Q14 1 15 2 Q16 3 15 4 L12 7" fill="#1e1e1e" stroke="#1e1e1e" stroke-width="1.8"/></svg>
<svg style="left:22px;top:601px;" width="5" height="5" viewBox="0 0 5 5"><path d="M5 0 V5 H0 Z" fill="#000"/></svg>
<svg style="left:8px;top:618px;" width="17" height="17" viewBox="0 0 17 17"><path d="M0.8 8.5 L8 1.3 L14.5 7.8 L7.3 15 Z" fill="#fff" stroke="#1e1e1e" stroke-width="1.4"/><path d="M8 1.3 L14.5 7.8 L16 6.3 L9.5 -0.2 Z" fill="#1e1e1e"/><path d="M3 9 H10.5 L7 12.3 Z" fill="#e00"/></svg>
<svg style="left:22px;top:629px;" width="5" height="5" viewBox="0 0 5 5"><path d="M5 0 V5 H0 Z" fill="#000"/></svg>
<svg style="left:20px;top:623px;" width="4" height="9" viewBox="0 0 4 9"><path d="M4 0 V7 L0 9 V4 Z" fill="#e00"/></svg>
<div class="a" style="left:5px;top:644px;width:22px;height:1px;background:#d6d6d6"></div>
<svg style="left:8px;top:660px;" width="17" height="17" viewBox="0 0 17 17"><circle cx="8.2" cy="8.2" r="7.6" fill="none" stroke="#c6c6c6" stroke-width="1.2"/><path d="M8.2 3 V13.4 M3 8.2 H13.4" stroke="#b8b8b8" stroke-width="1.6"/></svg>
<div class="a" style="left:62px;top:153px;width:63px;height:71px;border:1px solid #a9a9a9;background:#fff;box-shadow:2px 3px 8px rgba(0,0,0,0.28)"></div>
<svg style="left:67px;top:159px;" width="16" height="14" viewBox="0 0 16 14"><defs><linearGradient id="gp" x1="0" y1="0" x2="0" y2="1"><stop offset="0" stop-color="#9ee58f"/><stop offset="1" stop-color="#1e9d2a"/></linearGradient></defs><path d="M3 2.5 H6 Q6 0 7.5 0 Q9 0 9 2.5 H15 V6 H13 V9 H15 V13 H7 V10 Q7 8.5 5.5 8.5 L3 9 Q3 7.5 0 7 Q2 6 3 5 Z" fill="url(#gp)"/></svg>
<svg style="left:104px;top:161px;" width="11" height="11" viewBox="0 0 11 11"><path d="M0.5 0.5 L10.5 10.5 M10.5 0.5 L0.5 10.5" stroke="#777" stroke-width="1"/></svg>
<svg style="left:72px;top:189px;" width="18" height="28" viewBox="0 0 18 28"><defs><linearGradient id="gc" x1="0" y1="0" x2="1" y2="0"><stop offset="0" stop-color="#3a3a3a"/><stop offset="0.45" stop-color="#f0f0f0"/><stop offset="1" stop-color="#333"/></linearGradient></defs><rect x="0" y="0" width="17" height="3" fill="#1e1e1e"/><rect x="0" y="2" width="17" height="11" fill="url(#gc)"/><rect x="0" y="2" width="17" height="2" fill="#222"/><rect x="2" y="13" width="13" height="9" fill="url(#gc)"/><path d="M5 22 H13 L6 28 Z" fill="#ddd" stroke="#999" stroke-width="0.6"/></svg>
<svg style="left:99px;top:189px;" width="16" height="26" viewBox="0 0 16 26"><defs><linearGradient id="gq" x1="0" y1="0" x2="0" y2="1"><stop offset="0" stop-color="#a8e0ff"/><stop offset="1" stop-color="#1d6fd8"/></linearGradient></defs><path d="M1.5 5 Q2 0.5 8 0.5 Q14.5 0.5 14.5 6 Q14.5 9.5 11 11.5 Q9.5 12.5 9.5 15.5 H5.5 Q5 11 8.5 9 Q10 8 10 6.3 Q10 4.5 8 4.5 Q6 4.5 5.8 7 Z" fill="url(#gq)" stroke="#3f8ee0" stroke-width="0.6"/><circle cx="7.5" cy="21" r="3" fill="#1e6fd6"/></svg>
<div class="a" style="left:615px;top:180px;width:440px;height:518px;border:1px solid #9a9a9a;background:#f0f0f0;box-shadow:0 4px 18px rgba(0,0,0,0.35)"></div>
<div class="a" style="left:616px;top:181px;width:438px;height:25px;background:#fff"></div>
<svg style="left:619px;top:185px;" width="17" height="17" viewBox="0 0 17 17"><path d="M0 1.2 H3 L3.3 0 L4.2 1.2 H14.8 L15.5 0 L16 1.3 V3.2 Q15.5 5 13.5 5 H5 Q3.2 5 3 2.6 H0.3 Z" fill="#000"/><path d="M4.2 5.6 H14.6 V9 Q14.2 15.8 9.4 15.8 Q4.6 15.8 4.4 9 Z" fill="#000"/><rect x="7" y="6" width="5" height="1.3" fill="#fff"/><ellipse cx="9.4" cy="12.8" rx="1.5" ry="2" fill="#fff"/></svg>
<div class="t" style="left:640px;top:187px;font-size:12.6px;color:#9a9a9a;letter-spacing:0px">CutToolCDR-CUT</div>
<svg style="left:1034px;top:188px;" width="11" height="11" viewBox="0 0 11 11"><path d="M0 0 L11 11 M11 0 L0 11" stroke="#6a6a6a" stroke-width="1"/></svg>
<div class="a" style="left:627px;top:223px;width:173px;height:133px;border:1px solid #dadada"></div>
<div class="a" style="left:632px;top:222px;width:56px;height:3px;background:#f0f0f0"></div>
<div class="t" style="left:635px;top:217px;font-size:12.5px;letter-spacing:-0.8px;color:#000;margin-top:1px">端口设置</div>
<div class="a" style="left:627px;top:374px;width:173px;height:158px;border:1px solid #dadada"></div>
<div class="a" style="left:632px;top:373px;width:56px;height:3px;background:#f0f0f0"></div>
<div class="t" style="left:635px;top:368px;font-size:12.5px;letter-spacing:-0.8px;color:#000;margin-top:1px">补偿设置</div>
<div class="a" style="left:808px;top:223px;width:236px;height:312px;border:1px solid #dadada"></div>
<div class="a" style="left:813px;top:222px;width:58px;height:3px;background:#f0f0f0"></div>
<div class="t" style="left:816px;top:217px;font-size:12.5px;letter-spacing:-0.8px;color:#000;margin-top:1px">输出预览</div>
<div class="t" style="left:636px;top:244px;font-size:12.5px;letter-spacing:-0.8px;color:#000;margin-top:1px">端口类型</div>
<div class="a" style="left:690px;top:241px;width:101px;height:20px;background:#e5e5e5;border:1px solid #adadad"></div>
<div class="t" style="left:693px;top:247px;font-family:'Liberation Mono',monospace;font-size:12px;letter-spacing:-1.2px;color:#000">COM Port</div>
<svg style="left:778px;top:249px;" width="9" height="5" viewBox="0 0 9 5"><path d="M0.5 0.5 L4.5 4.5 L8.5 0.5" fill="none" stroke="#333" stroke-width="1.1"/></svg>
<div class="t" style="left:638px;top:274px;font-size:12.5px;letter-spacing:-0.8px;color:#000;margin-top:1px">端口号</div>
<div class="a" style="left:690px;top:271px;width:102px;height:20px;background:#e5e5e5;border:1px solid #adadad"></div>
<div class="t" style="left:693px;top:277px;font-family:'Liberation Mono',monospace;font-size:12px;letter-spacing:-1.2px;color:#000">COM1</div>
<svg style="left:778px;top:279px;" width="9" height="5" viewBox="0 0 9 5"><path d="M0.5 0.5 L4.5 4.5 L8.5 0.5" fill="none" stroke="#333" stroke-width="1.1"/></svg>
<div class="t" style="left:636px;top:301px;font-size:12.5px;letter-spacing:-0.8px;color:#000;margin-top:1px">波特率</div>
<div class="a" style="left:690px;top:298px;width:102px;height:20px;background:#e5e5e5;border:1px solid #adadad"></div>
<div class="t" style="left:693px;top:304px;font-family:'Liberation Mono',monospace;font-size:12px;letter-spacing:-1.2px;color:#000">9600</div>
<svg style="left:778px;top:306px;" width="9" height="5" viewBox="0 0 9 5"><path d="M0.5 0.5 L4.5 4.5 L8.5 0.5" fill="none" stroke="#333" stroke-width="1.1"/></svg>
<div class="t" style="left:636px;top:329px;font-size:12.5px;letter-spacing:-0.8px;color:#000;margin-top:1px">流控制</div>
<div class="a" style="left:690px;top:326px;width:102px;height:20px;background:#e5e5e5;border:1px solid #adadad"></div>
<div class="t" style="left:693px;top:332px;font-family:'Liberation Mono',monospace;font-size:12px;letter-spacing:-1.2px;color:#000">XON/XOFF</div>
<svg style="left:778px;top:334px;" width="9" height="5" viewBox="0 0 9 5"><path d="M0.5 0.5 L4.5 4.5 L8.5 0.5" fill="none" stroke="#333" stroke-width="1.1"/></svg>
<svg style="left:638px;top:388px;" width="13" height="13" viewBox="0 0 13 13"><rect x="0.5" y="0.5" width="12" height="12" fill="#fff" stroke="#333" stroke-width="1"/><path d="M2.5 6.5 L5 9.5 L10.5 3" fill="none" stroke="#222" stroke-width="1.2"/></svg>
<div class="t" style="left:654px;top:389px;font-size:12.5px;letter-spacing:-0.8px;color:#000;margin-top:1px">启用尖角补偿</div>
<div class="a" style="left:651px;top:410px;width:84px;height:24px;background:#fff;border:1px solid #a0a0a0;border-top-color:#7a7a7a;border-left-color:#8a8a8a"></div>
<div class="a" style="left:718px;top:412px;width:15px;height:10px;background:#e8e8e8;border:1px solid #c4c4c4"></div>
<div class="a" style="left:718px;top:422px;width:15px;height:10px;background:#e8e8e8;border:1px solid #c4c4c4"></div>
<svg style="left:722px;top:415px;" width="7" height="3.5" viewBox="0 0 7 3.5"><path d="M0 3.5 H7 L3.5 0 Z" fill="#222"/></svg>
<svg style="left:722px;top:425px;" width="7" height="3.5" viewBox="0 0 7 3.5"><path d="M0 0 H7 L3.5 3.5 Z" fill="#222"/></svg>
<div class="t" style="left:654px;top:415px;font-family:'Liberation Mono',monospace;font-size:10.5px;color:#000;letter-spacing:-0.3px">0.28</div>
<div class="t" style="left:752px;top:423px;font-family:'Liberation Mono',monospace;font-size:10px;color:#000;letter-spacing:0px">mm</div>
<svg style="left:636px;top:446px;" width="13" height="13" viewBox="0 0 13 13"><rect x="0.5" y="0.5" width="12" height="12" fill="#fff" stroke="#333" stroke-width="1"/><path d="M2.5 6.5 L5 9.5 L10.5 3" fill="none" stroke="#222" stroke-width="1.2"/></svg>
<div class="t" style="left:651px;top:447px;font-size:12.5px;letter-spacing:-0.8px;color:#000;margin-top:1px">启用闭合补偿</div>
<div class="a" style="left:651px;top:467px;width:84px;height:24px;background:#fff;border:1px solid #a0a0a0;border-top-color:#7a7a7a;border-left-color:#8a8a8a"></div>
<div class="a" style="left:718px;top:469px;width:15px;height:10px;background:#e8e8e8;border:1px solid #c4c4c4"></div>
<div class="a" style="left:718px;top:479px;width:15px;height:10px;background:#e8e8e8;border:1px solid #c4c4c4"></div>
<svg style="left:722px;top:472px;" width="7" height="3.5" viewBox="0 0 7 3.5"><path d="M0 3.5 H7 L3.5 0 Z" fill="#222"/></svg>
<svg style="left:722px;top:482px;" width="7" height="3.5" viewBox="0 0 7 3.5"><path d="M0 0 H7 L3.5 3.5 Z" fill="#222"/></svg>
<div class="t" style="left:654px;top:472px;font-family:'Liberation Mono',monospace;font-size:10.5px;color:#000;letter-spacing:-0.3px">0.4</div>
<div class="t" style="left:752px;top:480px;font-family:'Liberation Mono',monospace;font-size:10px;color:#000;letter-spacing:0px">mm</div>
<svg style="left:636px;top:505px;" width="13" height="13" viewBox="0 0 13 13"><rect x="0.5" y="0.5" width="12" height="12" fill="#fff" stroke="#333" stroke-width="1"/></svg>
<div class="t" style="left:652px;top:505px;font-size:12.5px;letter-spacing:-0.8px;color:#000;margin-top:1px">顺刀</div>
<svg style="left:636px;top:553px;" width="13" height="13" viewBox="0 0 13 13"><rect x="0.5" y="0.5" width="12" height="12" fill="#fff" stroke="#333" stroke-width="1"/></svg>
<div class="t" style="left:652px;top:554px;font-size:12.5px;letter-spacing:-0.8px;color:#000;margin-top:1px">切割后进纸</div>
<svg style="left:636px;top:582px;" width="13" height="13" viewBox="0 0 13 13"><rect x="0.5" y="0.5" width="12" height="12" fill="#fff" stroke="#333" stroke-width="1"/></svg>
<div class="t" style="left:652px;top:583px;font-size:12.5px;letter-spacing:-0.8px;color:#000;margin-top:1px">图形旋转</div>
<div class="a" style="left:652px;top:611px;width:61px;height:22px;background:#e1e1e1;border:1px solid #adadad"></div>
<div class="t" style="left:652px;top:616px;width:61px;text-align:center;font-size:12.5px;letter-spacing:-0.8px;color:#000;margin-top:1px">刷新端口</div>
<div class="a" style="left:803px;top:611px;width:61px;height:22px;background:#e1e1e1;border:1px solid #adadad"></div>
<div class="t" style="left:803px;top:616px;width:61px;text-align:center;font-size:12.5px;letter-spacing:-0.8px;color:#000;margin-top:1px">发送</div>
<div class="a" style="left:955px;top:611px;width:61px;height:22px;background:#e1e1e1;border:1px solid #adadad"></div>
<div class="t" style="left:955px;top:616px;width:61px;text-align:center;font-size:12.5px;letter-spacing:-0.8px;color:#000;margin-top:1px">取消</div>
<div class="t" style="left:627px;top:645px;font-size:12.5px;letter-spacing:-0.8px;color:#000;margin-top:1px">完成</div>
<div class="a" style="left:627px;top:665px;width:417px;height:21px;background:#06a925;border:1px solid #bcbcbc"></div>
<div class="t" style="left:815px;top:557px;font-size:12.5px;letter-spacing:-0.8px;color:#000;margin-top:1px">水平分辨率</div>
<div class="t" style="left:815px;top:580px;font-size:12.5px;letter-spacing:-0.8px;color:#000;margin-top:1px">垂直分辨率</div>
<div class="a" style="left:885px;top:553px;width:54px;height:21px;background:#fff;border:1px solid #7a7a7a;border-right-color:#b0b0b0;border-bottom-color:#b0b0b0"></div>
<div class="t" style="left:887px;top:557px;font-family:'Liberation Mono',monospace;font-size:11.5px;color:#000;letter-spacing:-0.9px">1016</div>
<div class="a" style="left:885px;top:578px;width:54px;height:21px;background:#fff;border:1px solid #7a7a7a;border-right-color:#b0b0b0;border-bottom-color:#b0b0b0"></div>
<div class="t" style="left:887px;top:582px;font-family:'Liberation Mono',monospace;font-size:11.5px;color:#000;letter-spacing:-0.9px">1016</div>
<div class="t" style="left:947px;top:559px;font-size:12.5px;letter-spacing:-0.8px;color:#000;margin-top:1px">线/英寸</div>
<div class="t" style="left:947px;top:583px;font-size:12.5px;letter-spacing:-0.8px;color:#000;margin-top:1px">线/英寸</div>
<div class="a" style="left:814px;top:232px;width:222px;height:296px;background:#fff;border:1px solid #000"></div>
<svg style="left:0;top:0" width="1076" height="716" viewBox="0 0 1076 716"><path d="M913.5 304.5 H938.5 V322.5 H1032.5 V338.5 H938.5 V352.5 H1020.5 V368.5 H938.5 V382.5 H1036.5 V398.5 H814.5 V382.5 H913.5 V368.5 H831.5 V352.5 H913.5 V338.5 H820.5 V322.5 H913.5 Z" fill="none" stroke="#000" stroke-width="1"/><path d="M841.5 528 V412.5 H1011.5 V504.5 Q1010 526 983.5 527.5 M942.5 527.5 L936.5 505.5 H978.5 Q987.5 503 987.5 496 V489.5 H865.5 V528" fill="none" stroke="#000" stroke-width="1"/><rect x="865.5" y="428.5" width="122" height="15" fill="none" stroke="#000" stroke-width="1"/><rect x="865.5" y="459.5" width="122" height="14" fill="none" stroke="#000" stroke-width="1"/></svg>
<svg style="left:944px;top:676px;" width="46" height="40" viewBox="0 0 46 40"><g fill="#fff" stroke="#fff" stroke-width="2.6" stroke-linejoin="round"><path d="M4.6 6.2 Q12 11 12.3 21 Q12.3 29.5 7.6 34 L10.5 34.2 Q16 29.5 15.9 21 Q15.5 11 5.6 5.4 Z"/><path transform="translate(44.8 0) scale(-1 1)" d="M4.6 6.2 Q12 11 12.3 21 Q12.3 29.5 7.6 34 L10.5 34.2 Q16 29.5 15.9 21 Q15.5 11 5.6 5.4 Z"/><path d="M12.5 16.5 L22.4 20.5 L32.3 16.5 V20.5 L22.4 24.5 L12.5 20.5 Z"/><rect x="20.4" y="23.5" width="3.8" height="10.3"/></g><g fill="#e05f64"><path d="M4.6 6.2 Q12 11 12.3 21 Q12.3 29.5 7.6 34 L10.5 34.2 Q16 29.5 15.9 21 Q15.5 11 5.6 5.4 Z"/><path transform="translate(44.8 0) scale(-1 1)" d="M4.6 6.2 Q12 11 12.3 21 Q12.3 29.5 7.6 34 L10.5 34.2 Q16 29.5 15.9 21 Q15.5 11 5.6 5.4 Z"/><path d="M12.5 16.5 L22.4 20.5 L32.3 16.5 V20.5 L22.4 24.5 L12.5 20.5 Z"/><rect x="20.4" y="23.5" width="3.8" height="10.3"/></g></svg>
<div class="t" style="left:987px;top:681px;font-size:19.5px;font-weight:bold;color:#f3a24a;letter-spacing:2.2px;font-family:'Liberation Serif',serif;text-shadow:0 0 1px #fff,0 0 2px #fff,1px 1px 1px #fff,-1px -1px 1px #fff">華印社區</div>
<div class="t" style="left:990px;top:704px;font-size:9.5px;color:#7a7a7a;letter-spacing:0.9px;text-shadow:0 0 2px #fff">www.52cnp.com</div></body></html>
